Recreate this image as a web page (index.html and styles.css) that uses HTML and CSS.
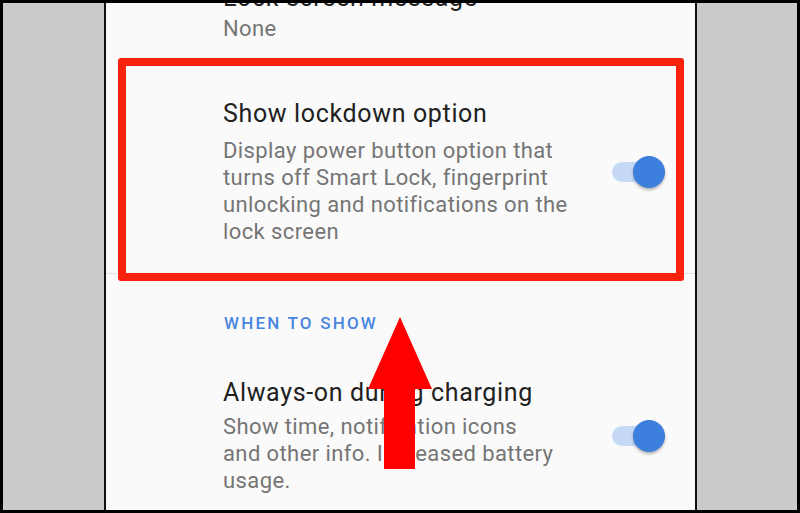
FILE: index.html
```
<!DOCTYPE html>
<html>
<head>
<meta charset="utf-8">
<link rel="stylesheet" href="styles.css">
</head>
<body>
<div class="screen">
  <div class="frame">
    <div class="side side-left"></div>
    <div class="panel">
      <div class="item item-clipped">
        <div class="text">
          <div class="title">Lock screen message</div>
          <div class="desc">None</div>
        </div>
      </div>
      <div class="item item-lockdown">
        <div class="text">
          <div class="title">Show lockdown option</div>
          <div class="desc">Display power button option that<br>turns off Smart Lock, fingerprint<br>unlocking and notifications on the<br>lock screen</div>
        </div>
        <div class="switch"><span class="track"></span><span class="thumb"></span></div>
      </div>
      <div class="divider"></div>
      <div class="section-header">WHEN TO SHOW</div>
      <div class="item item-charging">
        <div class="text">
          <div class="title">Always-on during charging</div>
          <div class="desc">Show time, notification icons<br>and other info. Increased battery<br>usage.</div>
        </div>
        <div class="switch"><span class="track"></span><span class="thumb"></span></div>
      </div>
    </div>
    <div class="side side-right"></div>
  </div>
  <div class="highlight-box"></div>
  <svg class="arrow" width="800" height="513" viewBox="0 0 800 513">
    <polygon points="400,317 432,389 415,389 415,469 384,469 384,389 368,389" fill="#ff0000"/>
  </svg>
</div>
</body>
</html>
```
FILE: styles.css
```
html, body {
  margin: 0;
  padding: 0;
}
body {
  width: 800px;
  height: 513px;
  overflow: hidden;
  font-family: Roboto, "Noto Sans", "Liberation Sans", sans-serif;
}
.screen {
  position: relative;
  width: 800px;
  height: 513px;
}
.frame {
  box-sizing: border-box;
  width: 800px;
  height: 513px;
  border: 3px solid #000;
  display: flex;
}
.side {
  background: #cbcbcb;
}
.side-left {
  width: 101px;
}
.side-right {
  width: 100px;
}
.panel {
  width: 589px;
  border-left: 2px solid #111;
  border-right: 2px solid #111;
  background: #fafafa;
  overflow: hidden;
}
.item {
  display: flex;
  align-items: center;
  padding: 32px 30px 28px 117px;
}
.item-clipped {
  margin-top: -52px;
  padding-bottom: 25px;
}
.item-clipped .desc {
  margin-top: 2px;
}
.text {
  flex: 1;
}
.title {
  font-size: 25px;
  line-height: 30px;
  letter-spacing: 0.65px;
  color: #212121;
}
.desc {
  margin-top: 8px;
  font-size: 22px;
  line-height: 27px;
  letter-spacing: 0.4px;
  color: #757575;
}
.switch {
  position: relative;
  width: 53px;
  height: 32px;
  flex: none;
}
.track {
  position: absolute;
  left: 0;
  top: 6px;
  width: 48px;
  height: 20px;
  border-radius: 10px;
  background: #c5d8f6;
}
.thumb {
  position: absolute;
  right: 0;
  top: 0;
  width: 32px;
  height: 32px;
  border-radius: 50%;
  background: #3d7fdd;
  box-shadow: 0 2px 3px rgba(0, 0, 0, 0.28);
}
.divider {
  height: 1px;
  background: #e3e3e3;
}
.section-header {
  padding: 39px 0 0 118px;
  font-size: 17px;
  line-height: 20px;
  font-weight: 500;
  letter-spacing: 2.2px;
  color: #4a86e0;
}
.item-charging {
  padding-top: 45px;
}
.item-charging .desc {
  margin-top: 5px;
}
.highlight-box {
  position: absolute;
  left: 118px;
  top: 58px;
  width: 566px;
  height: 223px;
  box-sizing: border-box;
  border: 8px solid #f8230c;
  border-radius: 3px;
}
.arrow {
  position: absolute;
  left: 0;
  top: 0;
}
```
